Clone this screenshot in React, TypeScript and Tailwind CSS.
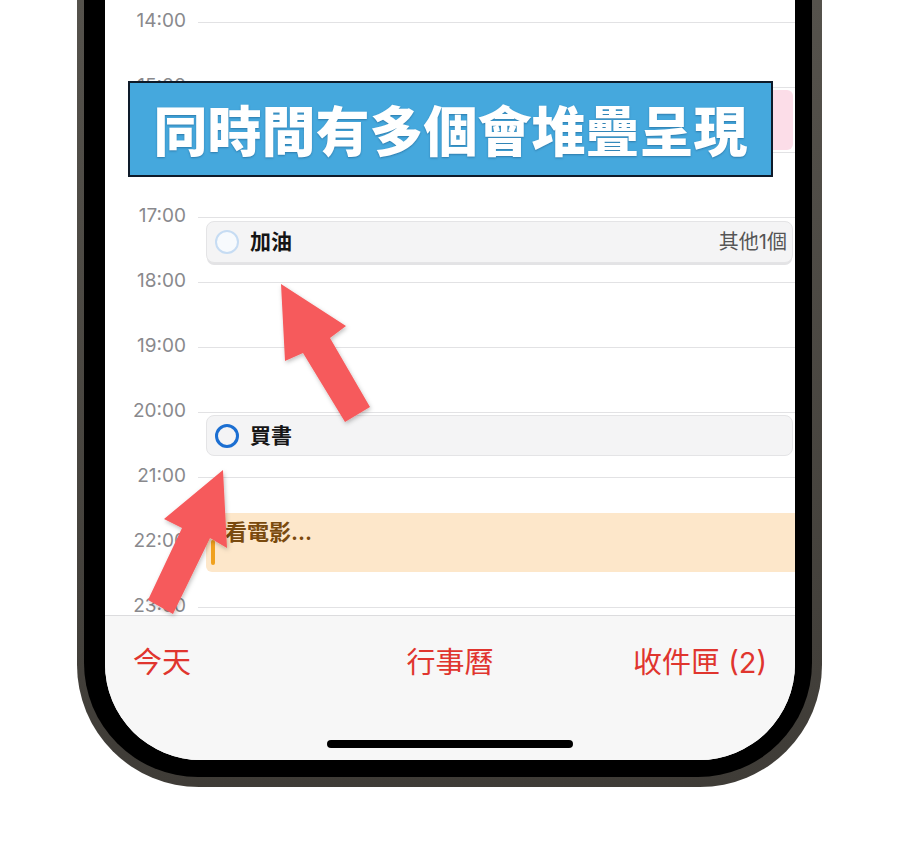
import React from 'react'

const hours = ['14:00', '15:00', '16:00', '17:00', '18:00', '19:00', '20:00', '21:00', '22:00', '23:00']

const sans = { fontFamily: '"Inter", "Noto Sans CJK TC", "Noto Sans", sans-serif' }

function HourGrid() {
  return (
    <div className="pt-[22px]">
      {hours.map(h => (
        <div key={h} className="flex h-[65px]">
          <div className="w-[81px] -mt-[12px] h-[22px] text-right text-[19px] leading-[22px] text-[#89898d]">{h}</div>
          <div className="flex-1 ml-[12px] border-t border-[#e2e2e4]" />
        </div>
      ))}
    </div>
  )
}

function Events() {
  return (
    <>
      {/* pink event mostly under the banner */}
      <div className="absolute left-[101px] top-[90px] w-[587px] h-[60px] rounded-[6px] bg-[#fcdde8]" />

      {/* 加油, with a second card stacked below */}
      <div className="absolute left-[101px] top-[221px] w-[587px] h-[42px] rounded-[8px] border border-[#e4e4e6] bg-[#f4f4f5] shadow-[0_3px_0_-1px_#e3e3e5] flex items-center pl-[8px] pr-[5px]">
        <div className="w-[24px] h-[24px] rounded-full border-[2.5px] border-[#c6dcf3] bg-[#f7fafd]" />
        <span className="ml-[11px] text-[21px] font-bold text-[#151515]">加油</span>
        <span className="ml-auto text-[20px] text-[#555]">其他1個</span>
      </div>

      {/* 買書 */}
      <div className="absolute left-[101px] top-[415px] w-[587px] h-[41px] rounded-[8px] border border-[#e4e4e6] bg-[#f4f4f5] flex items-center pl-[8px]">
        <div className="w-[24px] h-[24px] rounded-full border-[3px] border-[#1c6fd2]" />
        <span className="ml-[11px] text-[21px] font-bold text-[#151515]">買書</span>
      </div>

      {/* 看電影 */}
      <div className="absolute left-[101px] right-0 top-[513px] h-[59px] rounded-l-[6px] bg-[#fde7ca] pl-[19px] pt-[5px]">
        <div className="absolute left-[5px] top-[27px] w-[4px] h-[25px] rounded-full bg-[#f0a11e]" />
        <span className="text-[22px] leading-[28px] font-semibold text-[#7a4a0e]">看電影...</span>
      </div>
    </>
  )
}

function TabBar() {
  return (
    <div className="flex-1 flex flex-col bg-[#f7f7f7] border-t border-[#dcdcde]">
      <div className="flex px-[28px] pt-[30px] text-[29px] leading-[34px] text-[#e0352e]">
        <span className="flex-1">今天</span>
        <span>行事曆</span>
        <span className="flex-1 text-right">收件匣 (2)</span>
      </div>
      <div className="mt-auto mb-[12px] mx-auto w-[246px] h-[8px] rounded-full bg-black" />
    </div>
  )
}

function Arrows() {
  return (
    <svg className="absolute inset-0 pointer-events-none" width="898" height="859" viewBox="0 0 898 859">
      <defs>
        <filter id="sh" x="-20%" y="-20%" width="140%" height="140%">
          <feDropShadow dx="1" dy="2" stdDeviation="2" floodColor="#000" floodOpacity="0.25" />
        </filter>
      </defs>
      <polygon
        points="281,284 346,326 330,338 370,407 345,422 303,353 285,361"
        fill="#f65a5b"
        filter="url(#sh)"
      />
      <polygon
        points="223,470 227,548 210,538 173,614 148,600 182,528 164,519"
        fill="#f65a5b"
        filter="url(#sh)"
      />
    </svg>
  )
}

export default function App() {
  return (
    <div className="relative w-[898px] h-[859px] bg-white overflow-hidden" style={sans}>
      {/* phone frame */}
      <div className="ml-[77px] w-[745px] rounded-b-[122px] bg-gradient-to-b from-[#55524c] to-[#3f3c37] pl-[7px] pr-[10px] pb-[10px]">
        <div className="rounded-b-[114px] bg-black pl-[21px] pr-[17px] pb-[17px]">
          <div className="relative h-[760px] rounded-b-[96px] bg-white overflow-hidden flex flex-col">
            <div className="relative h-[615px] overflow-hidden">
              <HourGrid />
              <Events />
            </div>
            <TabBar />
          </div>
        </div>
      </div>

      {/* caption banner */}
      <div className="absolute left-[128px] top-[81px] w-[645px] h-[96px] bg-[#45a8dd] border-2 border-[#0e1b2a] flex items-center justify-center">
        <span
          className="text-[54px] leading-none font-black text-white [text-shadow:0_1px_2px_rgba(0,40,80,0.35)]"
          style={{ fontFamily: '"Noto Sans CJK TC", sans-serif' }}
        >
          同時間有多個會堆疊呈現
        </span>
      </div>

      <Arrows />
    </div>
  )
}
